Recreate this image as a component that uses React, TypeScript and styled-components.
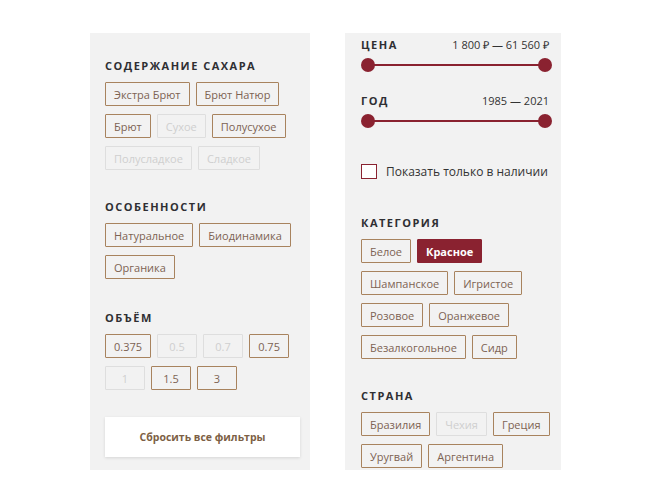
import styled, { createGlobalStyle } from "styled-components";

const GlobalStyle = createGlobalStyle`
  body {
    margin: 0;
    background: #fff;
    font-family: "Open Sans", "Liberation Sans", sans-serif;
  }
`;

const Page = styled.div`
  display: flex;
  flex-direction: row;
  gap: 35px;
  padding: 33px 0 0 90px;
  width: 669px;
  height: 503px;
  box-sizing: border-box;
`;

const Panel = styled.div<{ $w: number; $pad: string }>`
  display: flex;
  flex-direction: column;
  width: ${p => p.$w}px;
  height: 437px;
  box-sizing: border-box;
  padding: ${p => p.$pad};
  background: #f2f2f2;
  overflow: hidden;
`;

const Section = styled.div<{ $mt?: number }>`
  display: flex;
  flex-direction: column;
  margin-top: ${p => p.$mt || 0}px;
`;

const Heading = styled.div<{ $flat?: boolean }>`
  font-size: 11px;
  line-height: 16px;
  font-weight: 700;
  letter-spacing: 1.5px;
  color: #2f2f33;
  text-transform: uppercase;
  margin-bottom: ${p => (p.$flat ? 0 : 8)}px;
`;

const Tags = styled.div`
  display: flex;
  flex-wrap: wrap;
  gap: 8px 6px;
`;

const Tag = styled.div<{ $off?: boolean; $on?: boolean; $fixed?: boolean }>`
  height: 24px;
  box-sizing: border-box;
  display: flex;
  align-items: center;
  justify-content: center;
  min-width: ${p => (p.$fixed ? "40px" : "0")};
  padding: 0 8px;
  font-size: 11px;
  border: 1px solid
    ${p => (p.$on ? "#8a2230" : p.$off ? "#dedede" : "#a8835e")};
  background: ${p => (p.$on ? "#8a2230" : "transparent")};
  color: ${p => (p.$on ? "#fff" : p.$off ? "#cfcfcf" : "#7d6352")};
  font-weight: ${p => (p.$on ? 700 : 400)};
  border-radius: 1px;
`;

const ResetButton = styled.div`
  margin-top: 27px;
  height: 40px;
  display: flex;
  align-items: center;
  justify-content: center;
  background: #fff;
  box-shadow: 0 1px 3px rgba(0, 0, 0, 0.12);
  color: #7d5f45;
  font-size: 10.5px;
  font-weight: 700;
`;

const RangeHeader = styled.div`
  display: flex;
  justify-content: space-between;
  align-items: baseline;
`;

const RangeValue = styled.div`
  font-size: 11px;
  line-height: 16px;
  color: #333;
  padding-right: 3px;
`;

const Track = styled.div`
  position: relative;
  height: 14px;
  margin-top: 5px;
  display: flex;
  align-items: center;
  justify-content: space-between;
  &::before {
    content: "";
    position: absolute;
    left: 7px;
    right: 7px;
    top: 6px;
    height: 2px;
    background: #8a2230;
  }
`;

const Thumb = styled.div`
  position: relative;
  width: 14px;
  height: 14px;
  border-radius: 50%;
  background: #8a2230;
`;

const Check = styled.label`
  display: flex;
  align-items: center;
  gap: 9px;
  margin-top: 35px;
  font-size: 12px;
  color: #333;
`;

const Box = styled.span`
  width: 16px;
  height: 15px;
  box-sizing: border-box;
  border: 1px solid #8a2230;
  background: #fff;
`;

type Item = { t: string; off?: boolean; on?: boolean };

const sugar: Item[] = [
  { t: "Экстра Брют" },
  { t: "Брют Натюр" },
  { t: "Брют" },
  { t: "Сухое", off: true },
  { t: "Полусухое" },
  { t: "Полусладкое", off: true },
  { t: "Сладкое", off: true },
];

const volume: Item[] = [
  { t: "0.375" },
  { t: "0.5", off: true },
  { t: "0.7", off: true },
  { t: "0.75" },
  { t: "1", off: true },
  { t: "1.5" },
  { t: "3" },
];

const category: Item[] = [
  { t: "Белое" },
  { t: "Красное", on: true },
  { t: "Шампанское" },
  { t: "Игристое" },
  { t: "Розовое" },
  { t: "Оранжевое" },
  { t: "Безалкогольное" },
  { t: "Сидр" },
];

const country: Item[] = [
  { t: "Бразилия" },
  { t: "Чехия", off: true },
  { t: "Греция" },
  { t: "Уругвай" },
  { t: "Аргентина" },
];

const TagList = ({ items, fixed }: { items: Item[]; fixed?: boolean }) => (
  <Tags>
    {items.map(i => (
      <Tag key={i.t} $off={i.off} $on={i.on} $fixed={fixed}>
        {i.t}
      </Tag>
    ))}
  </Tags>
);

const Range = ({ label, value, mt }: { label: string; value: string; mt?: number }) => (
  <Section $mt={mt}>
    <RangeHeader>
      <Heading $flat>{label}</Heading>
      <RangeValue>{value}</RangeValue>
    </RangeHeader>
    <Track>
      <Thumb />
      <Thumb />
    </Track>
  </Section>
);

const App = () => {
  return (
    <Page>
      <GlobalStyle />
      <Panel $w={220} $pad="25px 10px 13px 15px">
        <Section>
          <Heading>Содержание сахара</Heading>
          <TagList items={sugar} />
        </Section>
        <Section $mt={29}>
          <Heading>Особенности</Heading>
          <TagList items={[{ t: "Натуральное" }, { t: "Биодинамика" }, { t: "Органика" }]} />
        </Section>
        <Section $mt={31}>
          <Heading>Объём</Heading>
          <TagList items={volume} fixed />
        </Section>
        <ResetButton>Сбросить все фильтры</ResetButton>
      </Panel>

      <Panel $w={216} $pad="4px 9px 0 16px">
        <Range label="Цена" value="1 800 ₽ — 61 560 ₽" />
        <Range label="Год" value="1985 — 2021" mt={21} />
        <Check>
          <Box />
          Показать только в наличии
        </Check>
        <Section $mt={35}>
          <Heading>Категория</Heading>
          <TagList items={category} />
        </Section>
        <Section $mt={29}>
          <Heading>Страна</Heading>
          <TagList items={country} />
        </Section>
      </Panel>
    </Page>
  );
};

export default App;
